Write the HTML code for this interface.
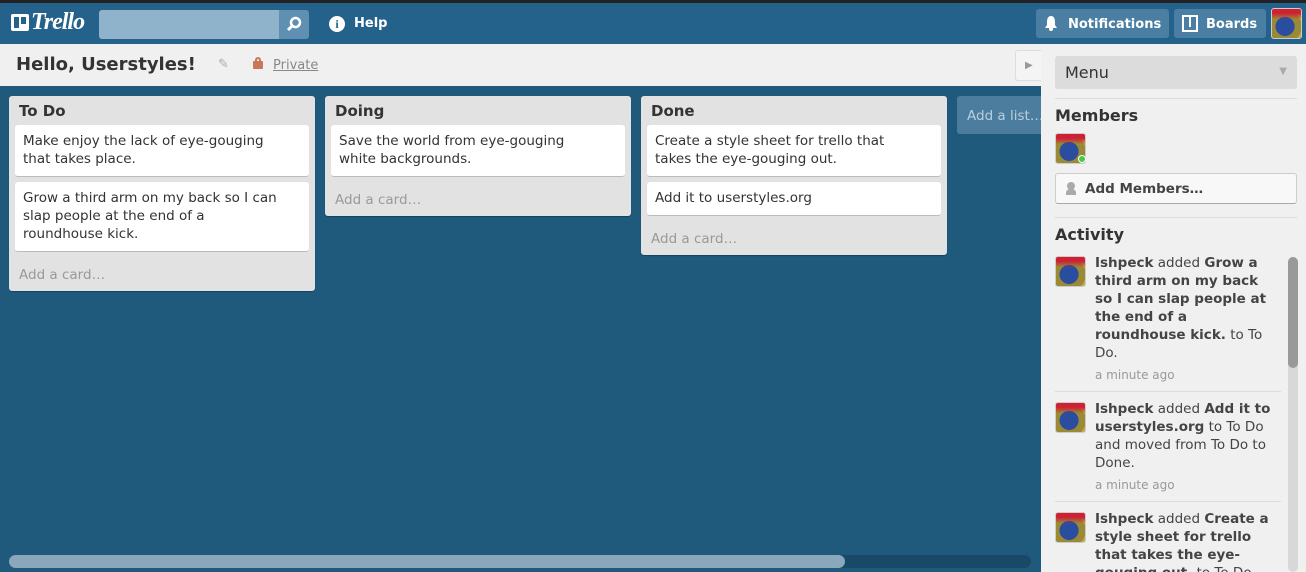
<!DOCTYPE html>
<html style="width:1306px;height:572px;overflow:hidden"><head><meta charset="utf-8"><style>
*{margin:0;padding:0;box-sizing:border-box}
body{width:1306px;height:572px;overflow:hidden;background:#1f5a7d;font-family:"DejaVu Sans","Liberation Sans",sans-serif;color:#333;position:relative;font-size:13px}
.abs{position:absolute}
.top{left:0;top:0;width:1306px;height:3px;background:#222}
.hdr{left:0;top:3px;width:1306px;height:41px;background:#25628b}
.btn{background:#4a7fa3;border-radius:3px;color:#fff;font-weight:bold;font-size:13px;height:29px;top:9px;line-height:31px}
.bar{left:0;top:44px;width:1041px;height:42px;background:#f0f0f0}
.list{background:#e2e2e2;border-radius:3px;width:306px;top:96px;box-shadow:0 1px 1px #14425e}
.lt{font-weight:bold;font-size:15px;padding:6px 10px 0;height:29px;color:#333}
.card{background:#fff;margin:0 6px 5px;border-radius:3px;border-bottom:1px solid #bbb;padding:7px 22px 8px 8px;line-height:18px;font-size:13.5px;color:#333}
.add{color:#999;padding:10px 10px 8px;font-size:13.5px}
.av{background:linear-gradient(#c23 0 15%,transparent 35%),radial-gradient(circle at 45% 60%,#2a4da0 0 40%,#9a8a35 41% 70%,#c9a64a 71%);border:1px solid #ccc;border-radius:3px}
.side{left:1041px;top:44px;width:265px;height:528px;background:#f0f0f0}
.act{left:1095px;font-size:13.5px;line-height:18px;width:185px;color:#444}
.act b{color:#444}
.ago{color:#999;font-size:12px}
.sep{left:1055px;width:226px;height:1px;background:#dcdcdc}
</style></head><body>
<div class="abs top"></div>
<div class="abs hdr"></div>
<div class="abs" style="left:11px;top:14px;width:18px;height:17px;background:#fff;border-radius:2px"></div>
<div class="abs" style="left:14px;top:17px;width:5px;height:11px;background:#25628b"></div>
<div class="abs" style="left:21px;top:17px;width:5px;height:7px;background:#25628b"></div>
<div class="abs" style="left:31px;top:9px;color:#fff;font-family:'Liberation Serif',serif;font-style:italic;font-weight:bold;font-size:24px;letter-spacing:-1px">Trello</div>
<div class="abs" style="left:99px;top:10px;width:180px;height:29px;background:#8fb3cb;border-radius:3px 0 0 3px"></div>
<div class="abs" style="left:279px;top:10px;width:30px;height:29px;background:#5f8fb1;border-radius:0 3px 3px 0"></div>
<svg class="abs" style="left:286px;top:16px" width="16" height="16"><circle cx="9.5" cy="6.5" r="4.5" fill="none" stroke="#fff" stroke-width="2.5"/><line x1="6" y1="10" x2="2" y2="14" stroke="#fff" stroke-width="3"/></svg>
<div class="abs" style="left:329px;top:16px;width:16px;height:16px;border-radius:50%;background:#fff;color:#25628b;font-weight:bold;font-size:12px;text-align:center;line-height:16px;font-family:'Liberation Serif',serif">i</div>
<div class="abs" style="left:354px;top:16px;color:#fff;font-weight:bold;font-size:13px">Help</div>
<div class="abs btn" style="left:1036px;width:133px;padding-left:32px">Notifications</div>
<svg class="abs" style="left:1044px;top:15px" width="14" height="16"><path d="M7 1C4 1 3 4 3 7v3L1 13h12l-2-3V7c0-3-1-6-4-6z" fill="#fff"/><circle cx="7" cy="14" r="2" fill="#fff"/></svg>
<div class="abs btn" style="left:1174px;width:92px;padding-left:32px">Boards</div>
<div class="abs" style="left:1182px;top:15px;width:16px;height:17px;border:2px solid #fff;background:#4a7fa3"></div>
<div class="abs" style="left:1189px;top:15px;width:2px;height:12px;background:#fff"></div>
<div class="abs av" style="left:1271px;top:8px;width:31px;height:31px"></div>

<div class="abs bar"></div>
<div class="abs" style="left:16px;top:54px;font-weight:bold;font-size:18px;color:#333">Hello, Userstyles!</div>
<div class="abs" style="left:218px;top:57px;color:#aaa;font-size:13px">✎</div>
<div class="abs" style="left:253px;top:61px;width:10px;height:8px;background:#c8775b;border-radius:1px"></div>
<div class="abs" style="left:255px;top:57px;width:6px;height:6px;border:2px solid #c8775b;border-bottom:none;border-radius:3px 3px 0 0"></div>
<div class="abs" style="left:273px;top:58px;color:#888;font-size:13px;text-decoration:underline">Private</div>
<div class="abs" style="left:1015px;top:50px;width:30px;height:31px;background:#f4f4f4;border:1px solid #ddd;border-radius:3px 0 0 3px;color:#999;font-size:10px;line-height:29px;padding-left:9px">▶</div>

<div class="abs list" style="left:9px">
<div class="lt">To Do</div>
<div class="card">Make enjoy the lack of eye-gouging that takes place.</div>
<div class="card">Grow a third arm on my back so I can slap people at the end of a roundhouse kick.</div>
<div class="add">Add a card…</div>
</div>
<div class="abs list" style="left:325px">
<div class="lt">Doing</div>
<div class="card">Save the world from eye-gouging white backgrounds.</div>
<div class="add">Add a card…</div>
</div>
<div class="abs list" style="left:641px">
<div class="lt">Done</div>
<div class="card">Create a style sheet for trello that takes the eye-gouging out.</div>
<div class="card">Add it to userstyles.org</div>
<div class="add">Add a card…</div>
</div>
<div class="abs" style="left:957px;top:96px;width:100px;height:38px;background:#4c7d9e;border-radius:3px;color:#b8cfdf;font-size:13.5px;padding:12px 10px">Add a list…</div>

<div class="abs" style="left:9px;top:555px;width:1022px;height:13px;background:#184a68;border-radius:7px"></div>
<div class="abs" style="left:9px;top:555px;width:836px;height:13px;background:#8aa7bb;border-radius:7px"></div>

<div class="abs side"></div>
<div class="abs" style="left:1055px;top:56px;width:242px;height:33px;background:#dcdcdc;border-radius:3px;font-size:16px;padding:7px 10px;color:#333">Menu<span style="position:absolute;right:10px;top:10px;color:#aaa;font-size:10px">▼</span></div>
<div class="abs sep" style="top:98px;width:242px"></div>
<div class="abs" style="left:1055px;top:106px;font-weight:bold;font-size:16px;color:#333">Members</div>
<div class="abs av" style="left:1055px;top:133px;width:31px;height:31px"></div>
<div class="abs" style="left:1078px;top:155px;width:8px;height:8px;border-radius:50%;background:#4c4;border:1px solid #fff"></div>
<div class="abs" style="left:1055px;top:173px;width:242px;height:31px;background:#f8f8f8;border:1px solid #ccc;border-bottom-color:#aaa;border-radius:3px;font-weight:bold;font-size:13.5px;padding:7px 0 0 29px;color:#444">Add Members…</div>
<div class="abs" style="left:1067px;top:182px;width:8px;height:8px;border-radius:50%;background:#aaa"></div>
<div class="abs" style="left:1066px;top:189px;width:10px;height:6px;border-radius:4px 4px 0 0;background:#aaa"></div>
<div class="abs sep" style="top:217px;width:242px"></div>
<div class="abs" style="left:1055px;top:225px;font-weight:bold;font-size:16px;color:#333">Activity</div>

<div class="abs av" style="left:1055px;top:256px;width:31px;height:31px"></div>
<div class="abs act" style="top:254px"><b>Ishpeck</b> added <b>Grow a third arm on my back so I can slap people at the end of a roundhouse kick.</b> to To Do.<div class="ago" style="margin-top:4px">a minute ago</div></div>
<div class="abs sep" style="top:391px"></div>
<div class="abs av" style="left:1055px;top:402px;width:31px;height:31px"></div>
<div class="abs act" style="top:400px"><b>Ishpeck</b> added <b>Add it to userstyles.org</b> to To Do and moved from To Do to Done.<div class="ago" style="margin-top:4px">a minute ago</div></div>
<div class="abs sep" style="top:501px"></div>
<div class="abs av" style="left:1055px;top:512px;width:31px;height:31px"></div>
<div class="abs act" style="top:510px;height:62px;overflow:hidden"><b>Ishpeck</b> added <b>Create a style sheet for trello that takes the eye-gouging out.</b> to To Do.</div>
<div class="abs" style="left:1288px;top:257px;width:10px;height:315px;background:#d8d8d8;border-radius:5px"></div>
<div class="abs" style="left:1288px;top:257px;width:10px;height:111px;background:#999;border-radius:5px"></div>
</body></html>
